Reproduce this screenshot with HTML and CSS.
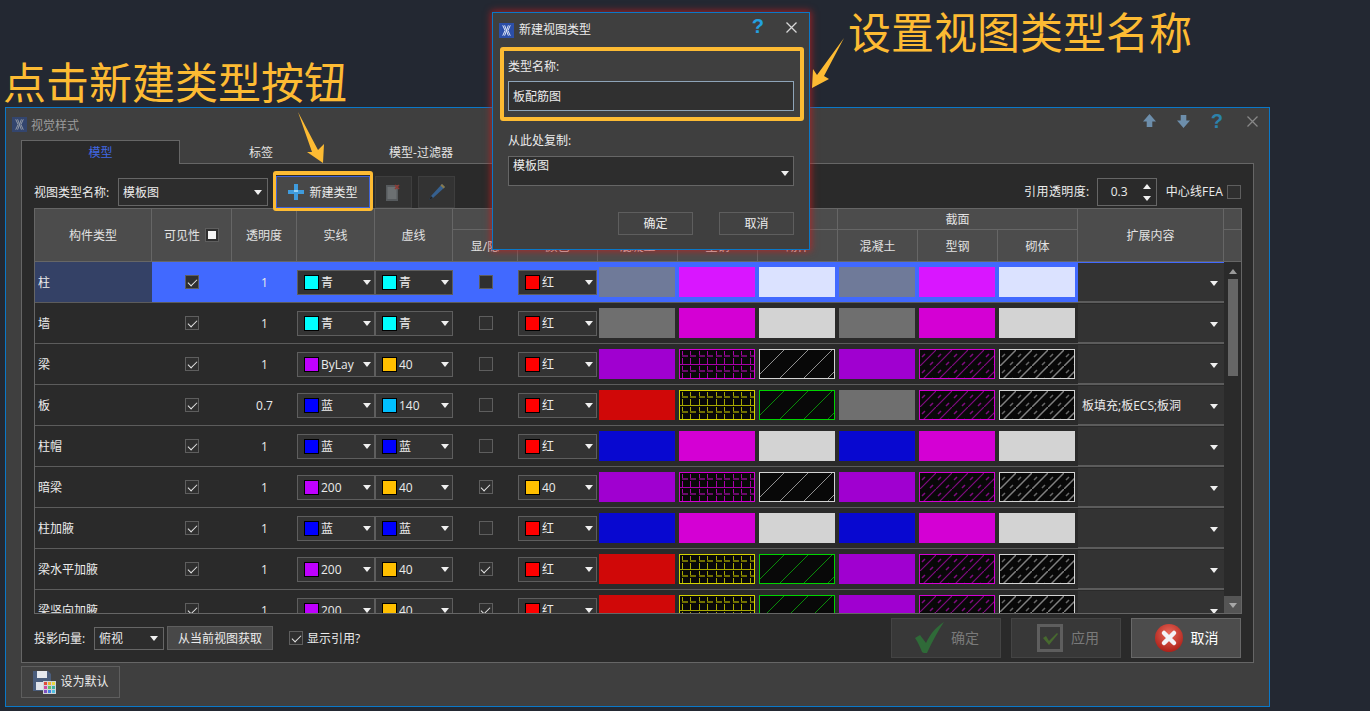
FILE: index.html
```html
<!DOCTYPE html>
<html lang="zh-CN">
<head>
<meta charset="utf-8">
<title>视觉样式</title>
<link rel="stylesheet" href="styles.css">
</head>
<body>
<div class="note note-left">点击新建类型按钮</div>
<div class="note note-right">设置视图类型名称</div>

<section class="win main-win">
  <header class="titlebar">
    <svg class="logo dim" viewBox="0 0 16 16"><rect width="16" height="16" fill="#2c4a8e"/><path d="M4 2.5 6.5 8 4 13.500M12 2.500 9.500 8 12 13.500M6 2.500 8 8 10 2.500M6 13.500 8 8 10 13.500" fill="none" stroke="#d8e2f4" stroke-width="1"/></svg>
    <span class="win-title">视觉样式</span>
    <div class="win-tools">
      <svg width="13" height="14" viewBox="0 0 14 15"><path d="M7 0 14 8H10V14H4V8H0Z" fill="#6d8eab"/></svg>
      <svg width="13" height="14" viewBox="0 0 14 15"><path d="M7 15 14 7H10V1H4V7H0Z" fill="#6d8eab"/></svg>
      <span class="help dimq">?</span>
      <svg width="11" height="11" viewBox="0 0 11 11"><path d="M.5.500 10.500 10.500M10.500.500.500 10.500" stroke="#888" stroke-width="1.300"/></svg>
    </div>
  </header>
  <div class="tabs">
    <div class="tab active">模型</div>
    <div class="tab second">标签</div>
    <div class="tab">模型-过滤器</div>
  </div>
  <div class="panel">
    <div class="toolbar">
      <span class="tb-label">视图类型名称:</span>
      <div class="field type-combo"><span>模板图</span></div>
      <div class="hl-btn">
        <button class="btn new-btn">
          <svg width="16" height="16" viewBox="0 0 16 16"><path d="M6 0h4v6h6v4h-6v6H6v-6H0V6h6Z" fill="#3f9bdc"/><path d="M6 6h4v2H6Z" fill="#9ad2f4"/></svg>
          新建类型
        </button>
      </div>
      <button class="btn icon-btn first-icon">
        <svg width="15" height="17" viewBox="0 0 15 17"><rect x="0" y="1" width="12" height="16" fill="#565a5d"/><rect x="1.500" y="3" width="9" height="12" fill="#6c7072"/><path d="M9 1 13 5M13 1 9 5" stroke="#8e3a34" stroke-width="1.600"/></svg>
      </button>
      <button class="btn icon-btn">
        <svg width="18" height="18" viewBox="0 0 18 18"><path d="M14 1 17 4 5 15 1 17 3 13Z" fill="#36608f"/><path d="M14 1 17 4 15.500 5.500 12.500 2.500Z" fill="#8a7a4a"/><path d="M1 17 3 13 5 15Z" fill="#222"/></svg>
      </button>
      <div class="tb-right">
        <span>引用透明度:</span>
        <div class="spin"><span>0.3</span><div class="spin-arrows"><i class="up"></i><i class="down"></i></div></div>
        <span class="fea">中心线FEA</span>
        <i class="cb"></i>
      </div>
    </div>

    <div class="table">
      <div class="thead">
        <div class="th tall">构件类型</div>
        <div class="th tall vis">可见性 <i class="cb head-cb"></i></div>
        <div class="th tall">透明度</div>
        <div class="th tall">实线</div>
        <div class="th tall">虚线</div>
        <div class="th group-5"></div>
        <div class="th group-3">截面</div>
        <div class="th tall">扩展内容</div>
        <div class="th"></div>
        <div class="th">显/隐</div>
        <div class="th">颜色</div>
        <div class="th">混凝土</div>
        <div class="th">型钢</div>
        <div class="th">砌体</div>
        <div class="th">混凝土</div>
        <div class="th">型钢</div>
        <div class="th">砌体</div>
        <div class="th"></div>
      </div>
      <div class="tbody">
        <div class="rows">

          <div class="row selected">
            <div class="name">柱</div>
            <div class="mid"><i class="cb checked"></i></div>
            <div class="mid num">1</div>
            <div class="combo"><i class="sw cyan"></i><span>青</span></div>
            <div class="combo"><i class="sw cyan"></i><span>青</span></div>
            <div class="mid"><i class="cb"></i></div>
            <div class="combo"><i class="sw red"></i><span>红</span></div>
            <i class="fill f-selgrey"></i><i class="fill f-selmag"></i><i class="fill f-selwhite"></i><i class="fill f-selgrey"></i><i class="fill f-selmag"></i><i class="fill f-selwhite"></i>
            <div class="ext"></div>
          </div>

          <div class="row">
            <div class="name">墙</div>
            <div class="mid"><i class="cb checked"></i></div>
            <div class="mid num">1</div>
            <div class="combo"><i class="sw cyan"></i><span>青</span></div>
            <div class="combo"><i class="sw cyan"></i><span>青</span></div>
            <div class="mid"><i class="cb"></i></div>
            <div class="combo"><i class="sw red"></i><span>红</span></div>
            <i class="fill f-grey"></i><i class="fill f-mag"></i><i class="fill f-light"></i><i class="fill f-grey"></i><i class="fill f-mag"></i><i class="fill f-light"></i>
            <div class="ext"></div>
          </div>

          <div class="row">
            <div class="name">梁</div>
            <div class="mid"><i class="cb checked"></i></div>
            <div class="mid num">1</div>
            <div class="combo"><i class="sw purple"></i><span>ByLay</span></div>
            <div class="combo"><i class="sw amber"></i><span>40</span></div>
            <div class="mid"><i class="cb"></i></div>
            <div class="combo"><i class="sw red"></i><span>红</span></div>
            <i class="fill f-purple"></i><i class="fill brick-m"></i><i class="fill hatch-w"></i><i class="fill f-purple"></i><i class="fill dense-m"></i><i class="fill dense-w"></i>
            <div class="ext"></div>
          </div>

          <div class="row">
            <div class="name">板</div>
            <div class="mid"><i class="cb checked"></i></div>
            <div class="mid num">0.7</div>
            <div class="combo"><i class="sw blue"></i><span>蓝</span></div>
            <div class="combo"><i class="sw sky"></i><span>140</span></div>
            <div class="mid"><i class="cb"></i></div>
            <div class="combo"><i class="sw red"></i><span>红</span></div>
            <i class="fill f-red"></i><i class="fill brick-y"></i><i class="fill hatch-g"></i><i class="fill f-grey"></i><i class="fill dense-m"></i><i class="fill dense-w"></i>
            <div class="ext"><span>板填充;板ECS;板洞</span></div>
          </div>

          <div class="row">
            <div class="name">柱帽</div>
            <div class="mid"><i class="cb checked"></i></div>
            <div class="mid num">1</div>
            <div class="combo"><i class="sw blue"></i><span>蓝</span></div>
            <div class="combo"><i class="sw blue"></i><span>蓝</span></div>
            <div class="mid"><i class="cb"></i></div>
            <div class="combo"><i class="sw red"></i><span>红</span></div>
            <i class="fill f-blue"></i><i class="fill f-mag"></i><i class="fill f-light"></i><i class="fill f-blue"></i><i class="fill f-mag"></i><i class="fill f-light"></i>
            <div class="ext"></div>
          </div>

          <div class="row">
            <div class="name">暗梁</div>
            <div class="mid"><i class="cb checked"></i></div>
            <div class="mid num">1</div>
            <div class="combo"><i class="sw purple"></i><span>200</span></div>
            <div class="combo"><i class="sw amber"></i><span>40</span></div>
            <div class="mid"><i class="cb checked"></i></div>
            <div class="combo"><i class="sw amber"></i><span>40</span></div>
            <i class="fill f-purple"></i><i class="fill brick-m"></i><i class="fill hatch-w"></i><i class="fill f-purple"></i><i class="fill dense-m"></i><i class="fill dense-w"></i>
            <div class="ext"></div>
          </div>

          <div class="row">
            <div class="name">柱加腋</div>
            <div class="mid"><i class="cb checked"></i></div>
            <div class="mid num">1</div>
            <div class="combo"><i class="sw blue"></i><span>蓝</span></div>
            <div class="combo"><i class="sw blue"></i><span>蓝</span></div>
            <div class="mid"><i class="cb"></i></div>
            <div class="combo"><i class="sw red"></i><span>红</span></div>
            <i class="fill f-blue"></i><i class="fill f-mag"></i><i class="fill f-light"></i><i class="fill f-blue"></i><i class="fill f-mag"></i><i class="fill f-light"></i>
            <div class="ext"></div>
          </div>

          <div class="row">
            <div class="name">梁水平加腋</div>
            <div class="mid"><i class="cb checked"></i></div>
            <div class="mid num">1</div>
            <div class="combo"><i class="sw purple"></i><span>200</span></div>
            <div class="combo"><i class="sw amber"></i><span>40</span></div>
            <div class="mid"><i class="cb checked"></i></div>
            <div class="combo"><i class="sw red"></i><span>红</span></div>
            <i class="fill f-red"></i><i class="fill brick-y"></i><i class="fill hatch-g"></i><i class="fill f-purple"></i><i class="fill dense-m"></i><i class="fill dense-w"></i>
            <div class="ext"></div>
          </div>

          <div class="row">
            <div class="name">梁竖向加腋</div>
            <div class="mid"><i class="cb checked"></i></div>
            <div class="mid num">1</div>
            <div class="combo"><i class="sw purple"></i><span>200</span></div>
            <div class="combo"><i class="sw amber"></i><span>40</span></div>
            <div class="mid"><i class="cb checked"></i></div>
            <div class="combo"><i class="sw red"></i><span>红</span></div>
            <i class="fill f-red"></i><i class="fill brick-y"></i><i class="fill hatch-g"></i><i class="fill f-purple"></i><i class="fill dense-m"></i><i class="fill dense-w"></i>
            <div class="ext"></div>
          </div>

        </div>
        <div class="scrollbar">
          <i class="sb-up"></i>
          <div class="sb-thumb"></div>
          <div class="sb-down"><i></i></div>
        </div>
      </div>
    </div>

    <div class="bottom">
      <span class="tb-label proj">投影向量:</span>
      <div class="field proj-combo"><span>俯视</span></div>
      <button class="btn fetch-btn">从当前视图获取</button>
      <label class="show-ref"><i class="cb checked"></i><span>显示引用?</span></label>
      <div class="actions">
        <button class="btn action off ok-btn">
          <svg width="30" height="32" viewBox="0 0 30 32"><path d="M0 16 5 13 11 21C15 12 21 5 29 0 23 9 17 20 12 31 9 31 8 31 7 30 5 25 3 20 0 16Z" fill="#2f6a38"/></svg>
          确定
        </button>
        <button class="btn action off apply-btn">
          <svg width="26" height="28" viewBox="0 0 26 28"><rect x="1.500" y="1.500" width="23" height="25" fill="none" stroke="#5e5e5e" stroke-width="3"/><path d="M6 14 9 12 12 17 20 9 21 10 12 21Z" fill="#47692f"/></svg>
          应用
        </button>
        <button class="btn action cancel">
          <svg width="28" height="28" viewBox="0 0 28 28"><defs><radialGradient id="cancelRed" cx="50%" cy="35%" r="65%"><stop offset="0" stop-color="#ea6a5c"/><stop offset="1" stop-color="#ad2018"/></radialGradient></defs><circle cx="14" cy="14" r="14" fill="url(#cancelRed)"/><path d="M9 9 19 19M19 9 9 19" stroke="#f3f3f8" stroke-width="4.500" stroke-linecap="round"/></svg>
          取消
        </button>
      </div>
    </div>
  </div>
  <div class="footer">
    <button class="btn default-btn">
      <svg width="24" height="24" viewBox="0 0 24 24"><path d="M1 1H16L19 4V21H1Z" fill="#4a5d7c"/><rect x="5" y="1" width="10" height="7" fill="#e6e9ee"/><rect x="4" y="12" width="11" height="8" fill="#dfe3ea"/><rect x="11" y="11" width="13" height="13" fill="#cfd3d8"/><rect x="12" y="12" width="3" height="3" fill="#e04a3a"/><rect x="16" y="12" width="3" height="3" fill="#f0b030"/><rect x="20" y="12" width="3" height="3" fill="#e8d840"/><rect x="12" y="16" width="3" height="3" fill="#d048a0"/><rect x="16" y="16" width="3" height="3" fill="#60c060"/><rect x="20" y="16" width="3" height="3" fill="#40b0a0"/><rect x="12" y="20" width="3" height="3" fill="#8050c0"/><rect x="16" y="20" width="3" height="3" fill="#4080e0"/><rect x="20" y="20" width="3" height="3" fill="#50c0e0"/></svg>
      设为默认
    </button>
  </div>
</section>

<section class="win dialog">
  <header class="dlg-title">
    <svg class="logo" viewBox="0 0 16 16"><rect width="16" height="16" fill="#2c4fa8"/><path d="M4 2.500 6.500 8 4 13.500M12 2.500 9.500 8 12 13.500M6 2.500 8 8 10 2.500M6 13.500 8 8 10 13.500" fill="none" stroke="#eef3ff" stroke-width="1"/></svg>
    <span class="dlg-name">新建视图类型</span>
    <span class="help">?</span>
    <svg class="dlg-close" width="11" height="11" viewBox="0 0 11 11"><path d="M.5.500 10.500 10.500M10.500.500.500 10.500" stroke="#d8d8d8" stroke-width="1.300"/></svg>
  </header>
  <div class="name-box">
    <div class="dlg-label">类型名称:</div>
    <div class="dlg-input">板配筋图</div>
  </div>
  <div class="copy-box">
    <div class="dlg-label">从此处复制:</div>
    <div class="field dlg-combo"><span>模板图</span></div>
    <div class="dlg-actions">
      <button class="btn dlg-btn">确定</button>
      <button class="btn dlg-btn">取消</button>
    </div>
  </div>
</section>

<svg class="arrows" width="1370" height="711" viewBox="0 0 1370 711">
  <path d="M298 112 312 152 307 152 323 163 324 144 318 150Z" fill="#fdbb33"/>
  <path d="M844 38 824 76 829 79 812 88 813 69 817 75Z" fill="#fdbb33"/>
</svg>
</body>
</html>
```

FILE: styles.css
```css
* { box-sizing: border-box; }

html, body {
  margin: 0;
  height: 711px;
  overflow: hidden;
}

body {
  position: relative;
  background: #232832;
  color: #ececec;
  font: 12px/16px "Open Sans", "Noto Sans CJK SC", sans-serif;
}

i { display: block; font-style: normal; }

button {
  font: inherit;
  color: inherit;
  padding: 0;
  margin: 0;
}

/* Annotations lying over the screenshot */
.note {
  position: absolute;
  color: #fdbb33;
  font: 43px/50px "Noto Sans CJK SC", sans-serif;
  white-space: nowrap;
}
.note-left { left: 3px; top: 55px; }
.note-right { left: 848px; top: 5px; }

.arrows {
  position: absolute;
  left: 0;
  top: 0;
  z-index: 5;
  pointer-events: none;
}

/* Windows on the desktop */
.win {
  position: absolute;
  border: 1px solid #0a78c8;
  background: #3f3f3f;
}

.main-win {
  left: 5px;
  top: 107px;
  width: 1265px;
  height: 600px;
  padding: 0 15px;
}

.titlebar {
  height: 32px;
  margin: 0 -15px;
  padding: 0 11px 0 6px;
  display: flex;
  align-items: center;
  color: #9c9c9c;
}

.logo { width: 15px; height: 15px; flex: none; }
.logo.dim { opacity: .6; margin-top: 1px; }
.win-title { margin-left: 4px; margin-top: 4px; }

.win-tools {
  margin-left: auto;
  display: flex;
  align-items: center;
  margin-top: -6px;
}
.win-tools svg:nth-child(1) { margin-right: 21px; }
.win-tools svg:nth-child(2) { margin-right: 21px; }
.win-tools .help { margin-right: 24px; }

.help {
  font: bold 20px/20px "Liberation Sans", sans-serif;
  color: #23a0e0;
}
.help.dimq { color: #2c82ab; }

/* Tabs */
.tabs {
  height: 23px;
  display: flex;
}
.tab {
  width: 160px;
  height: 24px;
  line-height: 24px;
  text-align: center;
  color: #e4e4e4;
  flex: none;
  position: relative;
  padding-top: 1px;
}
.tab.active {
  width: 159px;
  background: #2a2a2a;
  border: 1px solid #666;
  border-bottom: 0;
  color: #4168e4;
  z-index: 1;
  padding-top: 0;
}
.tab.second { margin-left: 1px; }

.panel {
  height: 500px;
  border: 1px solid #666;
  background: #2a2a2a;
  padding: 0 11px 0 12px;
}

/* Toolbar */
.toolbar {
  height: 44px;
  display: flex;
  align-items: flex-end;
}
.tb-label {
  width: 84px;
  height: 28px;
  line-height: 30px;
  margin-bottom: 2px;
  flex: none;
  white-space: nowrap;
}

.field {
  background: #2d2d2d;
  border: 1px solid #666;
  display: flex;
  align-items: center;
  padding: 0 5px 0 4px;
  flex: none;
}
.field span { padding-top: 2px; }
.field::after,
.combo::after,
.ext::after {
  content: "";
  margin-left: auto;
  border-top: 5px solid #f0f0f0;
  border-left: 4px solid transparent;
  border-right: 4px solid transparent;
  flex: none;
}

.type-combo { width: 150px; height: 28px; margin-bottom: 2px; }

.btn {
  background: #484848;
  border: 1px solid #5e5e5e;
  display: flex;
  align-items: center;
  justify-content: center;
  flex: none;
}

.hl-btn {
  width: 100px;
  height: 40px;
  margin: 0 0 -3px 5px;
  padding-top: 1px;
  border-style: solid;
  border-color: #fdbb33;
  border-width: 4px 3px 3px;
  border-radius: 3px;
  position: relative;
  z-index: 2;
  flex: none;
}
.new-btn {
  width: 94px;
  height: 32px;
  border-color: #3f62d8;
  gap: 5px;
  padding-top: 2px;
}
.new-btn svg { margin-top: -2px; }

.icon-btn {
  width: 37px;
  height: 32px;
  background: #333;
  border-color: #3e3e3e;
  margin-left: 6px;
}
.icon-btn.first-icon { margin-left: 2px; }

.tb-right {
  margin-left: auto;
  margin-right: 1px;
  margin-bottom: 2px;
  height: 28px;
  display: flex;
  align-items: center;
  white-space: nowrap;
}
.tb-right > span:first-child { letter-spacing: .4px; }
.spin {
  width: 60px;
  height: 28px;
  margin-left: 7px;
  border: 1px solid #666;
  display: flex;
  align-items: center;
  justify-content: space-between;
  padding: 0 5px 0 13px;
}
.spin-arrows { display: flex; flex-direction: column; gap: 7px; }
.spin-arrows .up {
  border-bottom: 5px solid #f0f0f0;
  border-left: 4px solid transparent;
  border-right: 4px solid transparent;
}
.spin-arrows .down {
  border-top: 5px solid #f0f0f0;
  border-left: 4px solid transparent;
  border-right: 4px solid transparent;
}
.fea { margin-left: 9px; margin-right: 4px; letter-spacing: .15px; }

/* Checkboxes */
.cb {
  width: 14px;
  height: 14px;
  background: #2f2f2f;
  border: 1px solid #5e5e5e;
  flex: none;
  display: flex;
  align-items: center;
  justify-content: center;
}
.cb.checked::after {
  content: "";
  width: 8px;
  height: 4px;
  margin-top: -2px;
  border-left: 1.6px solid #e6e6e6;
  border-bottom: 1.6px solid #e6e6e6;
  transform: rotate(-45deg);
}
.head-cb { margin-left: 5px; margin-top: -2px; }
.head-cb::after {
  content: "";
  width: 8px;
  height: 8px;
  background: #f4f4f4;
}

/* Table */
.table {
  height: 406px;
  border: 1px solid #666;
  border-right: 0;
  display: flex;
  flex-direction: column;
}
.thead {
  height: 53px;
  flex: none;
  display: grid;
  grid-template-columns: 117px 80px 65px 78px 78px 65px 80px 80px 80px 80px 80px 80px 80px 146px 18px;
  grid-template-rows: 21px 32px;
  background: #4c4c4c;
}
.th {
  border-right: 1px solid #666;
  border-bottom: 1px solid #666;
  display: flex;
  align-items: center;
  justify-content: center;
  color: #e2e2e2;
  white-space: nowrap;
  padding-top: 2px;
}
.th.tall { grid-row: span 2; }
.th.group-5 { grid-column: span 5; }
.th.group-3 { grid-column: span 3; }

.tbody {
  height: 351px;
  display: flex;
  overflow: hidden;
}
.rows { width: 1189px; flex: none; }
.row {
  height: 41px;
  display: grid;
  grid-template-columns: 117px 80px 65px 78px 78px 65px 80px 80px 80px 80px 80px 80px 80px 146px;
  align-items: center;
  border-bottom: 1px solid #5c5c5c;
}
.row.selected { background: #4169ff; }

.name {
  height: 40px;
  line-height: 42px;
  padding-left: 3px;
  white-space: nowrap;
}
.selected .name { background: #344166; }

.mid {
  display: flex;
  align-items: center;
  justify-content: center;
}
.mid.num { padding-top: 2px; }

.combo {
  height: 25px;
  background: #333;
  border: 1px solid #5e5e5e;
  display: flex;
  align-items: center;
  padding: 0 3px 0 6px;
  white-space: nowrap;
}
.combo span { padding-top: 2px; }
.combo:nth-child(7) { width: 79px; }
.sw {
  width: 15px;
  height: 15px;
  border: 1px solid #000;
  margin-right: 2px;
  flex: none;
}
.cyan { background: #00ffff; }
.red { background: #ff0000; }
.purple { background: #bf00ff; }
.amber { background: #ffbf00; }
.blue { background: #0000ff; }
.sky { background: #00bfff; }

.fill {
  width: 76px;
  height: 30px;
  margin-left: 1px;
}
.f-selgrey { background: #6f7a99; }
.f-selmag { background: #d916ff; }
.f-selwhite { background: #dbe2ff; }
.f-grey { background: #6f6f6f; }
.f-mag { background: #d400d4; }
.f-light { background: #d3d3d3; }
.f-purple { background: #a000d0; }
.f-red { background: #d00808; }
.f-blue { background: #0808d0; }

.brick-m, .brick-y, .hatch-w, .hatch-g, .dense-m, .dense-w {
  background-color: #080808;
  border: 1px solid;
  background-origin: padding-box;
}
.brick-m {
  border-color: #d400d4;
  background-image: url("data:image/svg+xml,%3Csvg xmlns='http://www.w3.org/2000/svg' width='17' height='15' shape-rendering='crispEdges'%3E%3Cg fill='%23a800a8'%3E%3Crect x='2' y='1' width='1' height='5'/%3E%3Crect x='10' y='1' width='1' height='5'/%3E%3Crect x='2' y='8' width='1' height='6'/%3E%3Crect x='10' y='8' width='1' height='6'/%3E%3Crect x='0' y='14' width='17' height='1'/%3E%3C/g%3E%3Cg fill='%23680a68'%3E%3Crect x='2' y='5' width='6' height='2'/%3E%3Crect x='10' y='5' width='6' height='2'/%3E%3C/g%3E%3C/svg%3E");
}
.brick-y {
  border-color: #d4d400;
  background-image: url("data:image/svg+xml,%3Csvg xmlns='http://www.w3.org/2000/svg' width='17' height='15' shape-rendering='crispEdges'%3E%3Cg fill='%23a8a800'%3E%3Crect x='2' y='1' width='1' height='5'/%3E%3Crect x='10' y='1' width='1' height='5'/%3E%3Crect x='2' y='8' width='1' height='6'/%3E%3Crect x='10' y='8' width='1' height='6'/%3E%3Crect x='0' y='14' width='17' height='1'/%3E%3C/g%3E%3Cg fill='%23706f00'%3E%3Crect x='2' y='5' width='6' height='2'/%3E%3Crect x='10' y='5' width='6' height='2'/%3E%3C/g%3E%3C/svg%3E");
}
.hatch-w {
  border-color: #d3d3d3;
  background-image: url("data:image/svg+xml,%3Csvg xmlns='http://www.w3.org/2000/svg' width='24' height='24'%3E%3Cpath d='M0 24 24 0' stroke='%23909090' stroke-width='1'/%3E%3C/svg%3E");
}
.hatch-g {
  border-color: #00d400;
  background-image: url("data:image/svg+xml,%3Csvg xmlns='http://www.w3.org/2000/svg' width='24' height='24'%3E%3Cpath d='M0 24 24 0' stroke='%230a8a0a' stroke-width='1'/%3E%3C/svg%3E");
}
.dense-m {
  border-color: #d400d4;
  background-image: url("data:image/svg+xml,%3Csvg xmlns='http://www.w3.org/2000/svg' width='16' height='16'%3E%3Cpath d='M0 16 16 0' stroke='%23800a80' stroke-width='1.200'/%3E%3Cpath d='M2 7 5 4M10 15 13 12' stroke='%23800a80' stroke-width='1.500'/%3E%3C/svg%3E");
}
.dense-w {
  border-color: #d3d3d3;
  background-image: url("data:image/svg+xml,%3Csvg xmlns='http://www.w3.org/2000/svg' width='16' height='16'%3E%3Cpath d='M0 16 16 0' stroke='%23808080' stroke-width='1.500'/%3E%3Cpath d='M2 7 5 4M10 15 13 12' stroke='%23686868' stroke-width='1.500'/%3E%3C/svg%3E");
}

.ext {
  height: 38px;
  background: #333;
  display: flex;
  align-items: center;
  padding: 2px 6px 0 4px;
  white-space: nowrap;
  box-shadow: 0 1px 0 #5c5c5c;
}

.scrollbar {
  width: 18px;
  flex: none;
  display: flex;
  flex-direction: column;
  align-items: center;
  padding-top: 7px;
  border-right: 1px solid #666;
  background: #2a2a2a;
}
.sb-up {
  border-bottom: 5px solid #9a9a9a;
  border-left: 4px solid transparent;
  border-right: 4px solid transparent;
}
.sb-thumb {
  width: 10px;
  height: 97px;
  margin-top: 5px;
  background: #666;
}
.sb-down {
  width: 100%;
  height: 17px;
  margin-top: auto;
  background: #555;
  display: flex;
  align-items: center;
  justify-content: center;
  padding-top: 2px;
}
.sb-down i {
  border-top: 5px solid #a8a8a8;
  border-left: 4px solid transparent;
  border-right: 4px solid transparent;
}

/* Bottom row */
.bottom {
  height: 48px;
  display: flex;
  align-items: center;
}
.tb-label.proj { width: 60px; height: 18px; line-height: 20px; margin: 0; }
.proj-combo { width: 70px; height: 23px; }
.fetch-btn {
  width: 106px;
  height: 24px;
  margin-left: 3px;
  background: #484848;
  padding-top: 2px;
}
.show-ref {
  margin-left: 16px;
  display: flex;
  align-items: center;
  gap: 4px;
}
.show-ref span { padding-top: 2px; }

.actions {
  margin-left: auto;
  margin-right: 1px;
  display: flex;
  gap: 10px;
}
.action {
  width: 110px;
  height: 40px;
  font-size: 14px;
  gap: 8px;
}
.action.off {
  background: #383838;
  border-color: #444;
  color: #7a7a7a;
}
.ok-btn { padding-left: 2px; gap: 6px; }
.apply-btn { padding-left: 4px; gap: 8px; }
.action.cancel {
  background: #4c4c4c;
  border-color: #686868;
  color: #fff;
  padding-left: 1px;
}

.footer { margin-top: 3px; }
.default-btn {
  width: 99px;
  height: 32px;
  gap: 4px;
  background: #424242;
}

/* Dialog */
.dialog {
  left: 492px;
  top: 12px;
  width: 318px;
  height: 238px;
  z-index: 3;
  box-shadow: 0 0 7px 1px rgba(205, 30, 30, .75);
}
.dlg-title {
  height: 34px;
  display: flex;
  align-items: center;
  padding: 0 12px 0 6px;
}
.dlg-name { margin-left: 5px; }
.dlg-title .help { margin-left: auto; margin-right: 22px; margin-top: -8px; }
.dlg-close { margin-top: -6px; }

.name-box {
  width: 304px;
  height: 74px;
  margin-left: 7px;
  padding: 0 4px;
  border: 4px solid #fdbb33;
  border-radius: 3px;
}
.dlg-label {
  height: 30px;
  line-height: 30px;
}
.name-box .dlg-label { height: 30px; line-height: 32px; }
.dlg-input {
  width: 286px;
  height: 30px;
  line-height: 30px;
  padding-left: 4px;
  background: #303030;
  border: 1px solid #8ea4b8;
}
.copy-box {
  margin-top: 5px;
  padding: 0 15px;
}
.dlg-combo {
  width: 286px;
  height: 30px;
  align-items: flex-start;
  padding: 1px 4px 0 4px;
}
.dlg-combo span { padding-top: 0; }
.dlg-combo::after { align-self: center; margin-top: 3px; }
.dlg-actions {
  margin-top: 26px;
  display: flex;
  justify-content: flex-end;
  gap: 26px;
}
.dlg-btn {
  width: 75px;
  height: 23px;
  background: #424242;
}
```
